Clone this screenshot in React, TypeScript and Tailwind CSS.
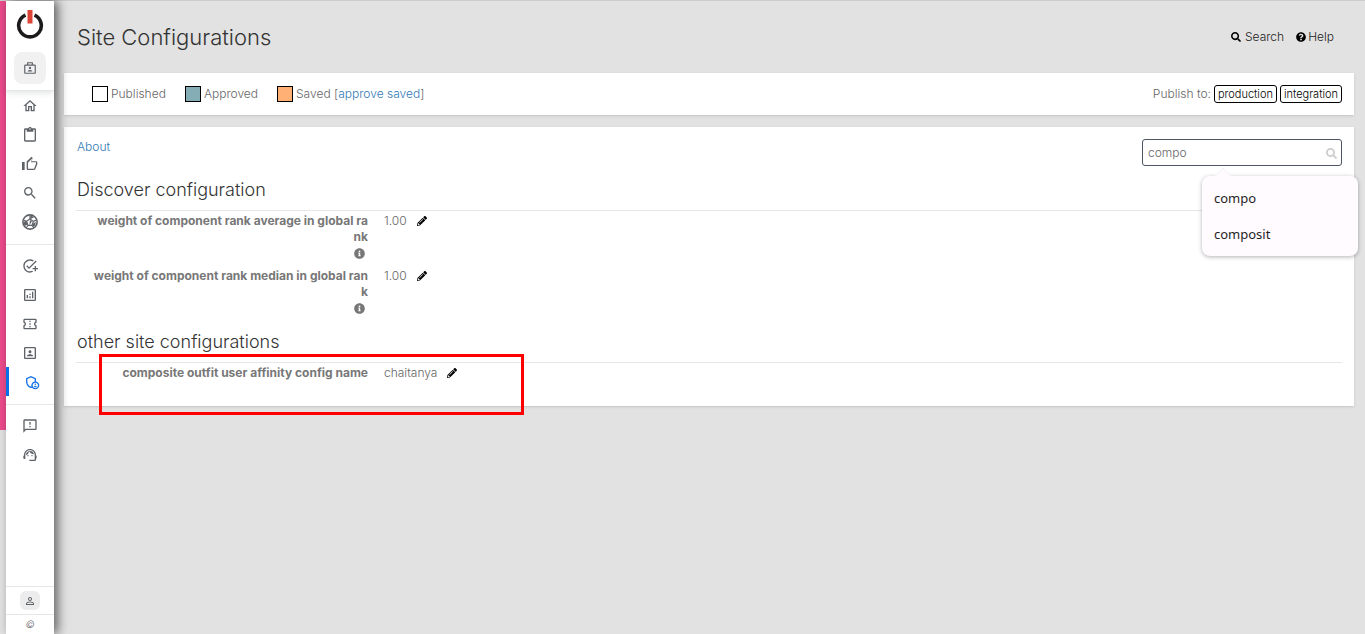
import clsx from 'clsx'
import { FaInfoCircle, FaPencilAlt, FaQuestionCircle, FaSearch } from 'react-icons/fa'
import {
    MdAddTask,
    MdOutlineAdminPanelSettings,
    MdOutlineAnalytics,
    MdOutlineConfirmationNumber,
    MdOutlineContentPaste,
    MdOutlineFeedback,
    MdOutlineHome,
    MdPersonOutline,
    MdPortrait,
    MdSearch,
    MdSupportAgent,
} from 'react-icons/md'

const ThumbIcon = ({ className }: { className?: string }) => (
    <svg viewBox="0 0 24 24" fill="currentColor" className={className}>
        <path d="M0 9h4v12H0zM15 3.8 13.700 9.400H21v2.100L18 19H9v-9zM9 21h9c.8 0 1.500-.5 1.800-1.200l3-7.100c.1-.2.2-.5.2-.7v-2c0-1.100-.9-2-2-2h-6.300l1-4.600v-.3c0-.4-.2-.8-.4-1.100L14.200 1 7.600 7.600C7.200 8 7 8.500 7 9v10c0 1.100.9 2 2 2z" />
    </svg>
)

const BallIcon = () => (
    <svg viewBox="0 0 24 24" fill="none" stroke="currentColor" className="size-4">
        <circle cx="12" cy="12" r="10.700" strokeWidth="2.400" />
        <path d="M12 7 17 11 15 17H9L7 11zM12 7V2M17 11l5-2M15 17l3 4M9 17l-3 4M7 11 2 9" strokeWidth="1.800" />
        <path d="M13 2 18 5 12 8zM2 12l5-2 1 6-4 2zM12 9l3 2-4 6zM17 14l4-2-2 6-4 1z" fill="currentColor" stroke="none" />
    </svg>
)

const BadgeIcon = () => (
    <svg viewBox="0 0 24 24" fill="none" stroke="currentColor" strokeWidth="2" className="w-3.5 h-3.5">
        <rect x="3" y="7" width="18" height="14" rx="1" />
        <path d="M8 7V3h8v4" />
        <circle cx="12" cy="12" r="2" fill="currentColor" stroke="none" />
        <path d="M8 18c0-3.500 8-3.500 8 0z" fill="currentColor" stroke="none" />
    </svg>
)

const Logo = () => (
    <svg viewBox="0 0 28 32" className="w-7 h-8">
        <path d="M9.500 6.200A11.300 11.300 0 1 0 18.500 6.200" fill="none" stroke="#1d1a1c" strokeWidth="3.600" />
        <path d="M11.500 1h5v13.500h-5z" fill="#db4437" />
    </svg>
)

const navGroups = [
    [
        { name: 'Home', icon: MdOutlineHome },
        { name: 'Tasks', icon: MdOutlineContentPaste },
        { name: 'Approvals', icon: ThumbIcon },
        { name: 'Find', icon: MdSearch },
        { name: 'Explore', icon: BallIcon },
    ],
    [
        { name: 'Add task', icon: MdAddTask },
        { name: 'Analytics', icon: MdOutlineAnalytics },
        { name: 'Tickets', icon: MdOutlineConfirmationNumber },
        { name: 'Contacts', icon: MdPortrait },
        { name: 'Administration', icon: MdOutlineAdminPanelSettings, active: true },
    ],
    [
        { name: 'Feedback', icon: MdOutlineFeedback },
        { name: 'Support', icon: MdSupportAgent },
    ],
]

const legend = [
    { label: 'Published', color: 'bg-white' },
    { label: 'Approved', color: 'bg-[#84adb5]' },
    { label: 'Saved', color: 'bg-[#ffb074]', action: 'approve saved' },
]

const sections = [
    {
        title: 'Discover configuration',
        rows: [
            { name: 'weight of component rank average in global rank', value: '1.00', info: true },
            { name: 'weight of component rank median in global rank', value: '1.00', info: true },
        ],
    },
    {
        title: 'other site configurations',
        rows: [{ name: 'composite outfit user affinity config name', value: 'chaitanya', marked: true }],
    },
]

function Sidebar() {
    return (
        <aside className="z-10 flex w-12 shrink-0 flex-col bg-white text-[#5f6368] shadow-[4px_0_10px_rgba(0,0,0,0.55)]">
            <div className="flex flex-col items-center border-b border-gray-200 pt-2 pb-1.5 shadow-[0_2px_6px_rgba(60,64,67,0.15)]">
                <a href="#" aria-label="Dashboard">
                    <Logo />
                </a>
                <button aria-label="Workspace" className="mt-[11px] flex size-8 items-center justify-center rounded-lg bg-[#f1f1f1]">
                    <BadgeIcon />
                </button>
            </div>
            <nav>
                {navGroups.map((group, i) => (
                    <ul key={i} className={clsx('pb-2', i > 0 && 'border-t border-gray-200 pt-1.5')}>
                        {group.map(({ name, icon: Icon, active }: any) => (
                            <li key={name}>
                                <a
                                    href="#"
                                    aria-label={name}
                                    className={clsx(
                                        'flex h-[29px] items-center justify-center',
                                        active && 'border-l-[3px] border-[#0b6fe8] text-[#1a73e8]'
                                    )}
                                >
                                    <Icon className="size-4" />
                                </a>
                            </li>
                        ))}
                    </ul>
                ))}
            </nav>
            <div className="mt-auto flex justify-center border-t border-gray-200 py-1">
                <button aria-label="Account" className="flex h-[19px] w-5 items-center justify-center rounded-md bg-[#ececec]">
                    <MdPersonOutline className="size-3" />
                </button>
            </div>
            <div className="h-5 border-t border-gray-200 text-center text-[10px] leading-[18px] italic">©</div>
        </aside>
    )
}

function PageHeader() {
    return (
        <header className="flex h-[72px] items-center justify-between pr-5 pl-[13px]">
            <h1 className="text-[22px] font-light text-[#333]">Site Configurations</h1>
            <div className="flex gap-3 text-xs text-[#222]">
                <a href="#" className="flex items-center gap-1">
                    <FaSearch className="size-2.5 text-black" />
                    Search
                </a>
                <a href="#" className="flex items-center gap-0.5">
                    <FaQuestionCircle className="size-2.5 text-black" />
                    Help
                </a>
            </div>
        </header>
    )
}

function LegendBar() {
    return (
        <section className="flex h-[42px] items-center justify-between bg-white pr-3 pl-7 shadow-sm">
            <div className="flex gap-[19px]">
                {legend.map((item) => (
                    <div key={item.label} className="flex items-center gap-[3px]">
                        <span className={clsx('size-4 border border-black', item.color)} />
                        <span>
                            {item.label}
                            {item.action && (
                                <>
                                    {' '}[<a href="#" className="text-[#337ab7]">{item.action}</a>]
                                </>
                            )}
                        </span>
                    </div>
                ))}
            </div>
            <div className="flex items-center gap-[3px]">
                <span>Publish to:</span>
                <button className="h-[18px] rounded-[3px] border border-black px-[3px] text-[11px] text-black">production</button>
                <button className="h-[18px] rounded-[3px] border border-black px-[3px] text-[11px] text-black">integration</button>
            </div>
        </section>
    )
}

function ConfigSearch() {
    return (
        <div className="relative">
            <input
                type="text"
                aria-label="Search configurations"
                defaultValue="compo"
                className="h-[27px] w-[200px] rounded-[3px] border border-[#4b5563] pr-6 pl-[5px] text-xs outline-none"
            />
            <FaSearch className="absolute top-[9px] right-[5px] size-[11px] text-[#ccc]" />
            <div className="absolute top-[37px] left-[60px] z-20 w-[156px] rounded-lg bg-[#fffbff] py-1 shadow-[0_1px_4px_rgba(0,0,0,0.3)]">
                <span className="absolute -top-1.5 left-[15px] size-3 rotate-45 border-t border-l border-gray-100 bg-[#fffbff]" />
                <ul className="relative font-['Noto_Sans',sans-serif] text-[13px] font-normal text-[#1f1f1f]">
                    <li className="flex h-9 items-center px-3">compo</li>
                    <li className="flex h-9 items-center px-3">composit</li>
                </ul>
            </div>
        </div>
    )
}

function ConfigRow({ row }: { row: any }) {
    return (
        <div className="relative flex gap-4 pl-[15px]">
            <dt className="w-[277px] text-right text-xs font-bold break-all text-[#777]">
                {row.name}
                {row.info && <FaInfoCircle className="mt-[3px] mr-[3px] mb-0.5 ml-auto size-[11px]" />}
            </dt>
            <dd className="flex h-4 items-center gap-2.5">
                {row.value}
                <button aria-label={`Edit ${row.name}`}>
                    <FaPencilAlt className="size-2.5 text-black" />
                </button>
            </dd>
            {row.marked && <span className="absolute -top-[11px] left-[23px] h-[61px] w-[425px] border-3 border-[#ff0000]" />}
        </div>
    )
}

export default function App() {
    return (
        <div className="flex min-h-screen border-t border-[#ccc] bg-[#e2e2e2] font-['Inter',sans-serif] text-xs leading-4 font-light text-[#666]">
            <div className="h-[429px] w-1.5 shrink-0 bg-[#ec4b8b]" />
            <Sidebar />
            <main className="mr-[11px] ml-2.5 min-w-0 flex-1">
                <PageHeader />
                <LegendBar />
                <section className="mt-3 bg-white px-3 pt-3 pb-[23px] shadow-sm">
                    <div className="flex h-[27px] items-start justify-between">
                        <a href="#" className="ml-px text-[#337ab7]">About</a>
                        <ConfigSearch />
                    </div>
                    {sections.map((section) => (
                        <div key={section.title} className="mt-[11px]">
                            <h2 className="ml-px h-[33px] text-lg leading-[26px] font-light text-[#333]">{section.title}</h2>
                            <dl className="flex flex-col gap-[7px] border-t border-gray-200 pt-0.5 pb-0.5">
                                {section.rows.map((row) => (
                                    <ConfigRow key={row.name} row={row} />
                                ))}
                            </dl>
                        </div>
                    ))}
                </section>
            </main>
        </div>
    )
}
